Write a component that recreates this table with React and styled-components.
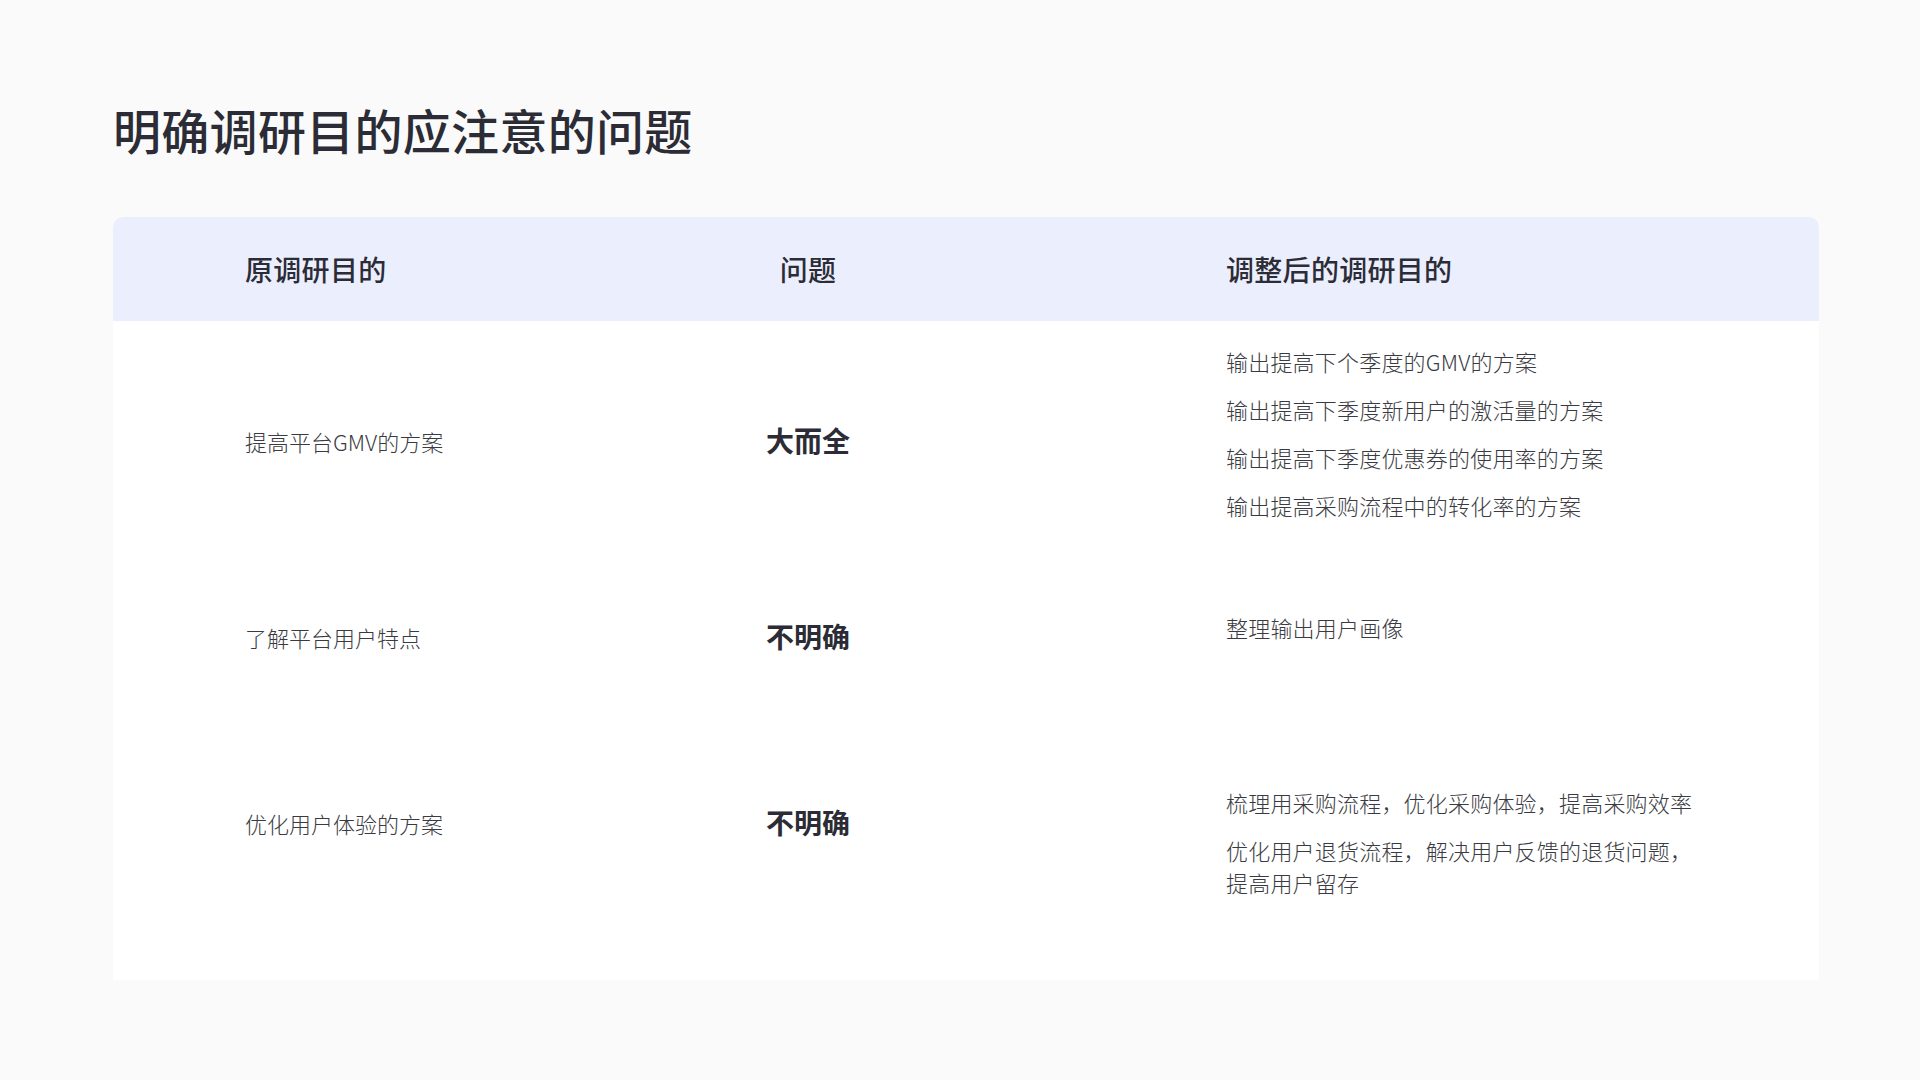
import React from 'react'
import styled, { createGlobalStyle } from 'styled-components'

const GlobalStyle = createGlobalStyle`
  html, body {
    margin: 0;
    padding: 0;
    background: #fafafa;
  }
  body {
    font-family: "Noto Sans CJK SC", "Noto Sans", sans-serif;
    color: #2b2c35;
  }
`

const rows = [
  {
    origin: '提高平台GMV的方案',
    issue: '大而全',
    height: 242,
    top: 24,
    goals: [
      '输出提高下个季度的GMV的方案',
      '输出提高下季度新用户的激活量的方案',
      '输出提高下季度优惠券的使用率的方案',
      '输出提高采购流程中的转化率的方案',
    ],
  },
  {
    origin: '了解平台用户特点',
    issue: '不明确',
    height: 150,
    top: 48,
    goals: ['整理输出用户画像'],
  },
  {
    origin: '优化用户体验的方案',
    issue: '不明确',
    height: 222,
    top: 73,
    goals: [
      '梳理用采购流程，优化采购体验，提高采购效率',
      '优化用户退货流程，解决用户反馈的退货问题，提高用户留存',
    ],
  },
]

export default function App() {
  return (
    <Page>
      <GlobalStyle />
      <Title>明确调研目的应注意的问题</Title>
      <Table>
        <HeaderRow>
          <HeadCell>原调研目的</HeadCell>
          <HeadCell $center>问题</HeadCell>
          <HeadCell $last>调整后的调研目的</HeadCell>
        </HeaderRow>
        <Body>
          {rows.map((row, idx) => (
            <Row key={idx} $height={row.height}>
              <OriginCell>{row.origin}</OriginCell>
              <IssueCell>{row.issue}</IssueCell>
              <GoalCell $top={row.top}>
                {row.goals.map((g, i) => (
                  <Goal key={i}>{g}</Goal>
                ))}
              </GoalCell>
            </Row>
          ))}
        </Body>
      </Table>
    </Page>
  )
}

const Page = styled.div`
  width: 1920px;
  height: 1080px;
  box-sizing: border-box;
  padding: 99px 0 0 113px;
  background: #fafafa;
  overflow: hidden;
`

const Title = styled.h1`
  margin: 0;
  font-size: 48px;
  line-height: 60px;
  font-weight: 500;
  color: #2b2c35;
  letter-spacing: 0.3px;
`

const Table = styled.div`
  margin-top: 58px;
  width: 1706px;
  background: #ffffff;
  border-radius: 10px 10px 0 0;
  overflow: hidden;
`

const HeaderRow = styled.div`
  display: grid;
  grid-template-columns: 363px 400px 1fr;
  align-items: center;
  height: 104px;
  padding-left: 132px;
  background: #ebeefd;
`

const HeadCell = styled.div`
  font-size: 28px;
  line-height: 40px;
  font-weight: 500;
  color: #2b2c35;
  letter-spacing: 0.3px;
  text-align: ${(p) => (p.$center ? 'center' : 'left')};
  padding-left: ${(p) => (p.$last ? '218px' : '0')};
`

const Body = styled.div`
  padding-bottom: 45px;
`

const Row = styled.div`
  display: grid;
  grid-template-columns: 363px 400px 1fr;
  align-items: center;
  height: ${(p) => p.$height}px;
  padding-left: 132px;
`

const OriginCell = styled.div`
  font-size: 22px;
  line-height: 32px;
  font-weight: 300;
  color: #3a3b42;
  margin-top: -2px;
`

const IssueCell = styled.div`
  font-size: 28px;
  line-height: 40px;
  font-weight: 600;
  color: #2b2c35;
  text-align: center;
  margin-top: -4px;
`

const GoalCell = styled.div`
  align-self: start;
  padding-top: ${(p) => p.$top}px;
  padding-left: 218px;
  display: flex;
  flex-direction: column;
  gap: 16px;
`

const Goal = styled.p`
  margin: 0;
  max-width: 478px;
  font-size: 22px;
  line-height: 32px;
  font-weight: 300;
  letter-spacing: 0.2px;
  color: #3a3b42;
`
